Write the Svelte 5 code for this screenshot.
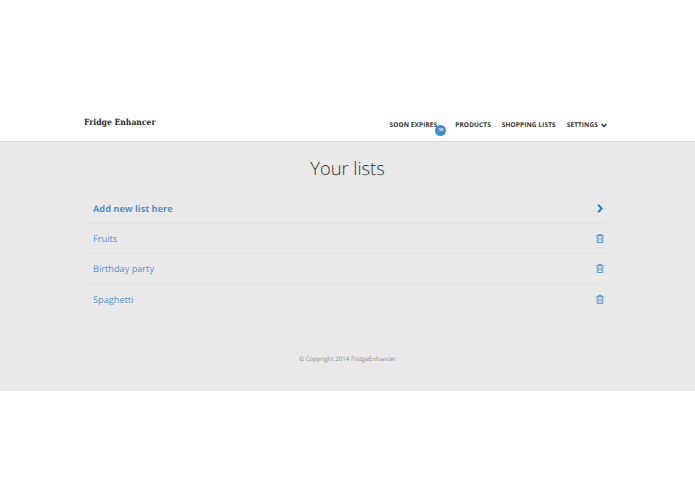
<script>
  let lists = ['Fruits', 'Birthday party', 'Spaghetti'];
  let nav = ['Products', 'Shopping lists'];
</script>

<header class="header">
  <div class="container">
    <a class="brand" href="#home">Fridge Enhancer</a>
    <nav class="nav">
      <a class="nav-link expires" href="#expires">
        Soon expires
        <span class="badge">10</span>
      </a>
      {#each nav as item}
        <a class="nav-link" href="#{item}">{item}</a>
      {/each}
      <a class="nav-link settings" href="#settings">
        Settings
        <svg class="caret" viewBox="0 0 10 8" width="6" height="5">
          <path d="M1 1.5 L5 5.5 L9 1.5" fill="none" stroke="currentColor" stroke-width="2.4" />
        </svg>
      </a>
    </nav>
  </div>
</header>

<main class="main">
  <h1 class="title">Your lists</h1>

  <ul class="lists">
    <li class="row">
      <a class="add" href="#new">Add new list here</a>
      <svg class="chevron" viewBox="0 0 8 12" width="6" height="9">
        <path d="M1.5 1 L6.2 6 L1.5 11" fill="none" stroke="currentColor" stroke-width="2.6" />
      </svg>
    </li>
    {#each lists as list}
      <li class="row">
        <a href="#{list}">{list}</a>
        <svg class="trash" viewBox="0 0 10 11" width="8" height="9">
          <path d="M0.5 2 H9.5 M3.2 2 V0.6 H6.8 V2 M1.5 2 V10.4 H8.5 V2 M3.6 4 V8.6 M6.4 4 V8.6" fill="none" stroke="currentColor" stroke-width="1.2" />
        </svg>
      </li>
    {/each}
  </ul>

  <footer class="footer">© Copyright 2014 FridgeEnhancer</footer>
</main>

<style>
  :global(body) {
    background: #fff;
    font-family: "Open Sans", "Liberation Sans", sans-serif;
    text-rendering: geometricPrecision;
  }

  a {
    color: inherit;
    text-decoration: none;
  }

  .header {
    height: 142px;
    box-sizing: border-box;
    padding-top: 104px;
    border-bottom: 1px solid #d8d8d8;
  }

  .container {
    display: flex;
    justify-content: space-between;
    padding: 0 88px 0 84px;
  }

  .brand {
    font-family: "DejaVu Serif", "Liberation Serif", serif;
    font-stretch: condensed;
    font-size: 8.5px;
    font-weight: 700;
    line-height: 37px;
    margin-top: 1px;
    color: #2b2b2b;
  }

  .nav {
    display: flex;
    gap: 11px;
    margin-top: 16px;
  }

  .nav-link {
    position: relative;
    font-size: 6.5px;
    line-height: 10px;
    height: 10px;
    font-weight: 700;
    letter-spacing: 0.1px;
    text-transform: uppercase;
    color: #333;
    display: flex;
    align-items: center;
    gap: 3px;
  }

  .expires {
    margin-right: 7px;
  }

  .badge {
    position: absolute;
    right: -9px;
    top: 5px;
    width: 11px;
    height: 11px;
    border-radius: 50%;
    background: #3b8fd4;
    color: #fff;
    font-size: 4px;
    line-height: 11px;
    text-align: center;
  }

  .main {
    background: #e9e9e9;
    height: 249px;
    box-sizing: border-box;
    padding-top: 15px;
  }

  .title {
    margin: 0;
    text-align: center;
    font-size: 18.3px;
    line-height: 24px;
    font-weight: 300;
    color: #333;
  }

  .lists {
    list-style: none;
    margin: 12px 88px 0 84px;
    padding: 0;
  }

  .row {
    display: flex;
    justify-content: space-between;
    align-items: center;
    height: 30px;
    padding: 0 3.5px 0 9px;
    border-bottom: 1px solid #e2e2e2;
    box-sizing: border-box;
    font-size: 9.2px;
    color: #4f94d0;
  }

  .row:first-child {
    height: 31px;
  }

  .row:last-child {
    border-bottom: none;
  }

  .add {
    font-weight: 700;
  }

  .chevron {
    color: #2f7fc1;
    margin-right: 1px;
  }

  .trash {
    color: #4f94d0;
  }

  .footer {
    margin-top: 39.5px;
    text-align: center;
    font-size: 6.2px;
    color: #8a8a8a;
  }
</style>
